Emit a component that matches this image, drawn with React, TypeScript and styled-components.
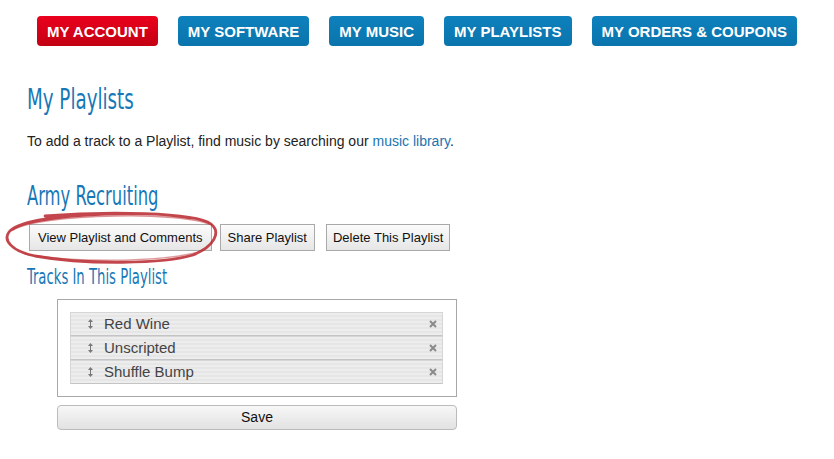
import styled, { createGlobalStyle } from "styled-components";

const GlobalStyle = createGlobalStyle`
  html, body {
    margin: 0;
    padding: 0;
    background: #ffffff;
  }
  body {
    font-family: "Liberation Sans", Arial, sans-serif;
    color: #222222;
  }
`;

const Page = styled.div`
  width: 834px;
  height: 459px;
  overflow: hidden;
  background: #fff;
`;

const Nav = styled.nav`
  display: flex;
  align-items: center;
  gap: 20px;
  padding: 16px 0 0 37px;
`;

const NavButton = styled.a<{ $active?: boolean }>`
  flex-shrink: 0;
  display: inline-flex;
  align-items: center;
  justify-content: center;
  height: 30px;
  padding: 0 10px;
  border-radius: 4px;
  white-space: nowrap;
  color: #fff;
  font-weight: bold;
  font-size: 15px;
  text-decoration: none;
  box-sizing: border-box;
  background: ${(p) =>
    p.$active
      ? "linear-gradient(#ea001d, #c30013)"
      : "linear-gradient(#0e81bd, #0a74ac)"};
`;

const Content = styled.main`
  padding: 0 0 0 27px;
`;

const Heading = styled.h1<{ $size: number; $mt: number }>`
  margin: ${(p) => p.$mt}px 0 0;
  font-family: "DejaVu Sans Condensed", "Liberation Sans Narrow", sans-serif;
  font-weight: normal;
  font-size: ${(p) => p.$size}px;
  line-height: 1.1;
  color: #1778b7;
  white-space: nowrap;
  transform: scaleX(0.7);
  transform-origin: left;
`;

const Intro = styled.p`
  margin: 17px 0 0;
  font-size: 14px;
  color: #222;
  a {
    color: #1a74b0;
    text-decoration: none;
  }
`;

const ButtonRow = styled.div`
  position: relative;
  display: flex;
  gap: 8px;
  margin: 14px 0 0 2px;
`;

const GreyButton = styled.button<{ $ml?: number; $px?: number }>`
  height: 27px;
  padding: 0 ${(p) => p.$px ?? 8}px;
  margin-left: ${(p) => p.$ml ?? 0}px;
  font-family: "Liberation Sans", Arial, sans-serif;
  font-size: 13px;
  color: #111;
  border: 1px solid #a9a9a9;
  border-radius: 0;
  background: linear-gradient(#fbfbfb, #e6e6e6);
`;

const Circle = styled.svg`
  position: absolute;
  left: -24px;
  top: -14px;
  pointer-events: none;
`;

const TrackBox = styled.div`
  width: 400px;
  margin: 9px 0 0 30px;
  border: 1px solid #a8a8a8;
  padding: 12px 13px 12px 12px;
  box-sizing: border-box;
`;

const TrackRow = styled.div`
  display: flex;
  align-items: center;
  height: 22px;
  border: 1px solid #d6d6d6;
  border-bottom-color: #c4c4c4;
  background: repeating-linear-gradient(
    #ededed 0px,
    #ededed 2px,
    #e6e6e6 2px,
    #e6e6e6 4px
  );
`;

const Handle = styled.svg`
  margin: 0 11px 0 17px;
  flex-shrink: 0;
`;

const TrackName = styled.span`
  flex: 1;
  font-size: 15px;
  color: #444;
`;

const Remove = styled.svg`
  margin-right: 5px;
  flex-shrink: 0;
`;

const SaveButton = styled.button`
  display: block;
  width: 400px;
  height: 25px;
  margin: 8px 0 0 30px;
  font-family: "Liberation Sans", Arial, sans-serif;
  font-size: 14px;
  color: #111;
  border: 1px solid #bbb;
  border-radius: 4px;
  background: linear-gradient(#f7f7f7, #e2e2e2);
`;

const navItems = [
  { label: "MY ACCOUNT", active: true },
  { label: "MY SOFTWARE" },
  { label: "MY MUSIC" },
  { label: "MY PLAYLISTS" },
  { label: "MY ORDERS & COUPONS" },
];

const tracks = ["Red Wine", "Unscripted", "Shuffle Bump"];

export default function App() {
  return (
    <Page>
      <GlobalStyle />
      <Nav>
        {navItems.map((n) => (
          <NavButton key={n.label} $active={n.active} href="#">
            {n.label}
          </NavButton>
        ))}
      </Nav>
      <Content>
        <Heading $size={29} $mt={38}>
          My Playlists
        </Heading>
        <Intro>
          To add a track to a Playlist, find music by searching our{" "}
          <a href="#">music library</a>.
        </Intro>
        <Heading $size={26} $mt={33}>
          Army Recruiting
        </Heading>
        <ButtonRow>
          <GreyButton>View Playlist and Comments</GreyButton>
          <GreyButton $px={7}>Share Playlist</GreyButton>
          <GreyButton $ml={3} $px={6}>
            Delete This Playlist
          </GreyButton>
          <Circle width="216" height="58" viewBox="0 0 216 58">
            <path
              d="M40 6 C 100 1, 190 2, 206 14 C 216 22, 210 36, 188 45 C 160 54, 80 55, 30 46 C 6 41, -2 30, 4 22 C 12 12, 50 6, 100 4 C 140 3, 170 5, 185 8"
              fill="none"
              stroke="#b7262c"
              strokeOpacity="0.85"
              strokeWidth="2.8"
              strokeLinecap="round"
            />
            <path
              d="M8 20 C 20 12, 60 7, 110 6 C 150 5, 190 8, 204 14"
              fill="none"
              stroke="#c0393e"
              strokeOpacity="0.55"
              strokeWidth="1.6"
              strokeLinecap="round"
            />
            <path
              d="M20 44 C 70 53, 150 52, 190 43"
              fill="none"
              stroke="#c0393e"
              strokeOpacity="0.5"
              strokeWidth="1.4"
              strokeLinecap="round"
            />
          </Circle>
        </ButtonRow>
        <Heading $size={21} $mt={15}>
          Tracks In This Playlist
        </Heading>
        <TrackBox>
          {tracks.map((t) => (
            <TrackRow key={t}>
              <Handle width="5" height="10" viewBox="0 0 5 10">
                <path d="M2.5 0 L5 3 L0 3 Z M2.5 10 L5 7 L0 7 Z" fill="#777" />
                <rect x="2" y="2" width="1" height="6" fill="#777" />
              </Handle>
              <TrackName>{t}</TrackName>
              <Remove width="8" height="8" viewBox="0 0 8 8">
                <path
                  d="M1 1 L7 7 M7 1 L1 7"
                  stroke="#8a8a8a"
                  strokeWidth="2"
                />
              </Remove>
            </TrackRow>
          ))}
        </TrackBox>
        <SaveButton>Save</SaveButton>
      </Content>
    </Page>
  );
}
